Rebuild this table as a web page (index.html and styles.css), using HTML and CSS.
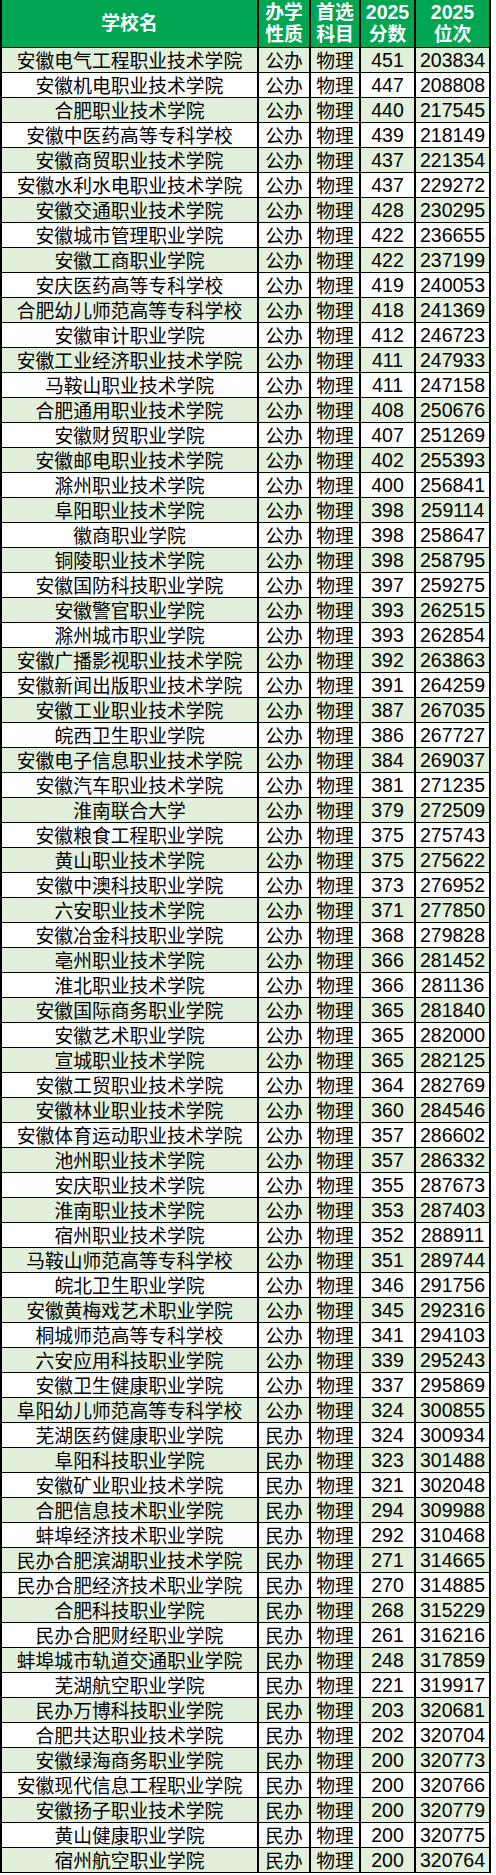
FILE: index.html
```html
<!DOCTYPE html>
<html lang="zh-CN">
<head>
<meta charset="utf-8">
<title>安徽专科院校 2025 物理类录取分数</title>
<link rel="stylesheet" href="styles.css">
</head>
<body>
<div class="sheet">
<div class="row head"><div class="cell"><span class="stack">学校名</span></div><div class="cell"><span class="stack">办学<br>性质</span></div><div class="cell"><span class="stack">首选<br>科目</span></div><div class="cell"><span class="stack"><span class="digits">2025</span><br>分数</span></div><div class="cell"><span class="stack"><span class="digits">2025</span><br>位次</span></div></div>
<div class="row"><div class="cell">安徽电气工程职业技术学院</div><div class="cell">公办</div><div class="cell">物理</div><div class="cell num">451</div><div class="cell num">203834</div></div>
<div class="row"><div class="cell">安徽机电职业技术学院</div><div class="cell">公办</div><div class="cell">物理</div><div class="cell num">447</div><div class="cell num">208808</div></div>
<div class="row"><div class="cell">合肥职业技术学院</div><div class="cell">公办</div><div class="cell">物理</div><div class="cell num">440</div><div class="cell num">217545</div></div>
<div class="row"><div class="cell">安徽中医药高等专科学校</div><div class="cell">公办</div><div class="cell">物理</div><div class="cell num">439</div><div class="cell num">218149</div></div>
<div class="row"><div class="cell">安徽商贸职业技术学院</div><div class="cell">公办</div><div class="cell">物理</div><div class="cell num">437</div><div class="cell num">221354</div></div>
<div class="row"><div class="cell">安徽水利水电职业技术学院</div><div class="cell">公办</div><div class="cell">物理</div><div class="cell num">437</div><div class="cell num">229272</div></div>
<div class="row"><div class="cell">安徽交通职业技术学院</div><div class="cell">公办</div><div class="cell">物理</div><div class="cell num">428</div><div class="cell num">230295</div></div>
<div class="row"><div class="cell">安徽城市管理职业学院</div><div class="cell">公办</div><div class="cell">物理</div><div class="cell num">422</div><div class="cell num">236655</div></div>
<div class="row"><div class="cell">安徽工商职业学院</div><div class="cell">公办</div><div class="cell">物理</div><div class="cell num">422</div><div class="cell num">237199</div></div>
<div class="row"><div class="cell">安庆医药高等专科学校</div><div class="cell">公办</div><div class="cell">物理</div><div class="cell num">419</div><div class="cell num">240053</div></div>
<div class="row"><div class="cell">合肥幼儿师范高等专科学校</div><div class="cell">公办</div><div class="cell">物理</div><div class="cell num">418</div><div class="cell num">241369</div></div>
<div class="row"><div class="cell">安徽审计职业学院</div><div class="cell">公办</div><div class="cell">物理</div><div class="cell num">412</div><div class="cell num">246723</div></div>
<div class="row"><div class="cell">安徽工业经济职业技术学院</div><div class="cell">公办</div><div class="cell">物理</div><div class="cell num">411</div><div class="cell num">247933</div></div>
<div class="row"><div class="cell">马鞍山职业技术学院</div><div class="cell">公办</div><div class="cell">物理</div><div class="cell num">411</div><div class="cell num">247158</div></div>
<div class="row"><div class="cell">合肥通用职业技术学院</div><div class="cell">公办</div><div class="cell">物理</div><div class="cell num">408</div><div class="cell num">250676</div></div>
<div class="row"><div class="cell">安徽财贸职业学院</div><div class="cell">公办</div><div class="cell">物理</div><div class="cell num">407</div><div class="cell num">251269</div></div>
<div class="row"><div class="cell">安徽邮电职业技术学院</div><div class="cell">公办</div><div class="cell">物理</div><div class="cell num">402</div><div class="cell num">255393</div></div>
<div class="row"><div class="cell">滁州职业技术学院</div><div class="cell">公办</div><div class="cell">物理</div><div class="cell num">400</div><div class="cell num">256841</div></div>
<div class="row"><div class="cell">阜阳职业技术学院</div><div class="cell">公办</div><div class="cell">物理</div><div class="cell num">398</div><div class="cell num">259114</div></div>
<div class="row"><div class="cell">徽商职业学院</div><div class="cell">公办</div><div class="cell">物理</div><div class="cell num">398</div><div class="cell num">258647</div></div>
<div class="row"><div class="cell">铜陵职业技术学院</div><div class="cell">公办</div><div class="cell">物理</div><div class="cell num">398</div><div class="cell num">258795</div></div>
<div class="row"><div class="cell">安徽国防科技职业学院</div><div class="cell">公办</div><div class="cell">物理</div><div class="cell num">397</div><div class="cell num">259275</div></div>
<div class="row"><div class="cell">安徽警官职业学院</div><div class="cell">公办</div><div class="cell">物理</div><div class="cell num">393</div><div class="cell num">262515</div></div>
<div class="row"><div class="cell">滁州城市职业学院</div><div class="cell">公办</div><div class="cell">物理</div><div class="cell num">393</div><div class="cell num">262854</div></div>
<div class="row"><div class="cell">安徽广播影视职业技术学院</div><div class="cell">公办</div><div class="cell">物理</div><div class="cell num">392</div><div class="cell num">263863</div></div>
<div class="row"><div class="cell">安徽新闻出版职业技术学院</div><div class="cell">公办</div><div class="cell">物理</div><div class="cell num">391</div><div class="cell num">264259</div></div>
<div class="row"><div class="cell">安徽工业职业技术学院</div><div class="cell">公办</div><div class="cell">物理</div><div class="cell num">387</div><div class="cell num">267035</div></div>
<div class="row"><div class="cell">皖西卫生职业学院</div><div class="cell">公办</div><div class="cell">物理</div><div class="cell num">386</div><div class="cell num">267727</div></div>
<div class="row"><div class="cell">安徽电子信息职业技术学院</div><div class="cell">公办</div><div class="cell">物理</div><div class="cell num">384</div><div class="cell num">269037</div></div>
<div class="row"><div class="cell">安徽汽车职业技术学院</div><div class="cell">公办</div><div class="cell">物理</div><div class="cell num">381</div><div class="cell num">271235</div></div>
<div class="row"><div class="cell">淮南联合大学</div><div class="cell">公办</div><div class="cell">物理</div><div class="cell num">379</div><div class="cell num">272509</div></div>
<div class="row"><div class="cell">安徽粮食工程职业学院</div><div class="cell">公办</div><div class="cell">物理</div><div class="cell num">375</div><div class="cell num">275743</div></div>
<div class="row"><div class="cell">黄山职业技术学院</div><div class="cell">公办</div><div class="cell">物理</div><div class="cell num">375</div><div class="cell num">275622</div></div>
<div class="row"><div class="cell">安徽中澳科技职业学院</div><div class="cell">公办</div><div class="cell">物理</div><div class="cell num">373</div><div class="cell num">276952</div></div>
<div class="row"><div class="cell">六安职业技术学院</div><div class="cell">公办</div><div class="cell">物理</div><div class="cell num">371</div><div class="cell num">277850</div></div>
<div class="row"><div class="cell">安徽冶金科技职业学院</div><div class="cell">公办</div><div class="cell">物理</div><div class="cell num">368</div><div class="cell num">279828</div></div>
<div class="row"><div class="cell">亳州职业技术学院</div><div class="cell">公办</div><div class="cell">物理</div><div class="cell num">366</div><div class="cell num">281452</div></div>
<div class="row"><div class="cell">淮北职业技术学院</div><div class="cell">公办</div><div class="cell">物理</div><div class="cell num">366</div><div class="cell num">281136</div></div>
<div class="row"><div class="cell">安徽国际商务职业学院</div><div class="cell">公办</div><div class="cell">物理</div><div class="cell num">365</div><div class="cell num">281840</div></div>
<div class="row"><div class="cell">安徽艺术职业学院</div><div class="cell">公办</div><div class="cell">物理</div><div class="cell num">365</div><div class="cell num">282000</div></div>
<div class="row"><div class="cell">宣城职业技术学院</div><div class="cell">公办</div><div class="cell">物理</div><div class="cell num">365</div><div class="cell num">282125</div></div>
<div class="row"><div class="cell">安徽工贸职业技术学院</div><div class="cell">公办</div><div class="cell">物理</div><div class="cell num">364</div><div class="cell num">282769</div></div>
<div class="row"><div class="cell">安徽林业职业技术学院</div><div class="cell">公办</div><div class="cell">物理</div><div class="cell num">360</div><div class="cell num">284546</div></div>
<div class="row"><div class="cell">安徽体育运动职业技术学院</div><div class="cell">公办</div><div class="cell">物理</div><div class="cell num">357</div><div class="cell num">286602</div></div>
<div class="row"><div class="cell">池州职业技术学院</div><div class="cell">公办</div><div class="cell">物理</div><div class="cell num">357</div><div class="cell num">286332</div></div>
<div class="row"><div class="cell">安庆职业技术学院</div><div class="cell">公办</div><div class="cell">物理</div><div class="cell num">355</div><div class="cell num">287673</div></div>
<div class="row"><div class="cell">淮南职业技术学院</div><div class="cell">公办</div><div class="cell">物理</div><div class="cell num">353</div><div class="cell num">287403</div></div>
<div class="row"><div class="cell">宿州职业技术学院</div><div class="cell">公办</div><div class="cell">物理</div><div class="cell num">352</div><div class="cell num">288911</div></div>
<div class="row"><div class="cell">马鞍山师范高等专科学校</div><div class="cell">公办</div><div class="cell">物理</div><div class="cell num">351</div><div class="cell num">289744</div></div>
<div class="row"><div class="cell">皖北卫生职业学院</div><div class="cell">公办</div><div class="cell">物理</div><div class="cell num">346</div><div class="cell num">291756</div></div>
<div class="row"><div class="cell">安徽黄梅戏艺术职业学院</div><div class="cell">公办</div><div class="cell">物理</div><div class="cell num">345</div><div class="cell num">292316</div></div>
<div class="row"><div class="cell">桐城师范高等专科学校</div><div class="cell">公办</div><div class="cell">物理</div><div class="cell num">341</div><div class="cell num">294103</div></div>
<div class="row"><div class="cell">六安应用科技职业学院</div><div class="cell">公办</div><div class="cell">物理</div><div class="cell num">339</div><div class="cell num">295243</div></div>
<div class="row"><div class="cell">安徽卫生健康职业学院</div><div class="cell">公办</div><div class="cell">物理</div><div class="cell num">337</div><div class="cell num">295869</div></div>
<div class="row"><div class="cell">阜阳幼儿师范高等专科学校</div><div class="cell">公办</div><div class="cell">物理</div><div class="cell num">324</div><div class="cell num">300855</div></div>
<div class="row"><div class="cell">芜湖医药健康职业学院</div><div class="cell">民办</div><div class="cell">物理</div><div class="cell num">324</div><div class="cell num">300934</div></div>
<div class="row"><div class="cell">阜阳科技职业学院</div><div class="cell">民办</div><div class="cell">物理</div><div class="cell num">323</div><div class="cell num">301488</div></div>
<div class="row"><div class="cell">安徽矿业职业技术学院</div><div class="cell">民办</div><div class="cell">物理</div><div class="cell num">321</div><div class="cell num">302048</div></div>
<div class="row"><div class="cell">合肥信息技术职业学院</div><div class="cell">民办</div><div class="cell">物理</div><div class="cell num">294</div><div class="cell num">309988</div></div>
<div class="row"><div class="cell">蚌埠经济技术职业学院</div><div class="cell">民办</div><div class="cell">物理</div><div class="cell num">292</div><div class="cell num">310468</div></div>
<div class="row"><div class="cell">民办合肥滨湖职业技术学院</div><div class="cell">民办</div><div class="cell">物理</div><div class="cell num">271</div><div class="cell num">314665</div></div>
<div class="row"><div class="cell">民办合肥经济技术职业学院</div><div class="cell">民办</div><div class="cell">物理</div><div class="cell num">270</div><div class="cell num">314885</div></div>
<div class="row"><div class="cell">合肥科技职业学院</div><div class="cell">民办</div><div class="cell">物理</div><div class="cell num">268</div><div class="cell num">315229</div></div>
<div class="row"><div class="cell">民办合肥财经职业学院</div><div class="cell">民办</div><div class="cell">物理</div><div class="cell num">261</div><div class="cell num">316216</div></div>
<div class="row"><div class="cell">蚌埠城市轨道交通职业学院</div><div class="cell">民办</div><div class="cell">物理</div><div class="cell num">248</div><div class="cell num">317859</div></div>
<div class="row"><div class="cell">芜湖航空职业学院</div><div class="cell">民办</div><div class="cell">物理</div><div class="cell num">221</div><div class="cell num">319917</div></div>
<div class="row"><div class="cell">民办万博科技职业学院</div><div class="cell">民办</div><div class="cell">物理</div><div class="cell num">203</div><div class="cell num">320681</div></div>
<div class="row"><div class="cell">合肥共达职业技术学院</div><div class="cell">民办</div><div class="cell">物理</div><div class="cell num">202</div><div class="cell num">320704</div></div>
<div class="row"><div class="cell">安徽绿海商务职业学院</div><div class="cell">民办</div><div class="cell">物理</div><div class="cell num">200</div><div class="cell num">320773</div></div>
<div class="row"><div class="cell">安徽现代信息工程职业学院</div><div class="cell">民办</div><div class="cell">物理</div><div class="cell num">200</div><div class="cell num">320766</div></div>
<div class="row"><div class="cell">安徽扬子职业技术学院</div><div class="cell">民办</div><div class="cell">物理</div><div class="cell num">200</div><div class="cell num">320779</div></div>
<div class="row"><div class="cell">黄山健康职业学院</div><div class="cell">民办</div><div class="cell">物理</div><div class="cell num">200</div><div class="cell num">320775</div></div>
<div class="row"><div class="cell">宿州航空职业学院</div><div class="cell">民办</div><div class="cell">物理</div><div class="cell num">200</div><div class="cell num">320764</div></div>
</div>
</body>
</html>
```
FILE: styles.css
```css
html, body {
  margin: 0;
  padding: 0;
  background: #ffffff;
}

.sheet {
  width: 491px;
  font-family: "Liberation Sans", "Noto Sans CJK SC", sans-serif;
  color: #000000;
}

.row {
  display: grid;
  grid-template-columns: 257px 52px 50px 55px 75px;
  height: 25px;
  box-sizing: border-box;
  border-left: 2px solid #000000;
  border-bottom: 1px solid #000000;
}

.row:nth-child(even) {
  background: #e2efda;
}

.row:nth-child(odd) {
  background: #ffffff;
}

.cell {
  box-sizing: border-box;
  border-right: 2px solid #000000;
  display: flex;
  align-items: center;
  justify-content: center;
  text-align: center;
  white-space: nowrap;
  font-family: "Noto Sans CJK SC", sans-serif;
  font-size: 18.8px;
  line-height: 24px;
}

.cell.num {
  font-family: "Liberation Sans", sans-serif;
  font-size: 19.5px;
}

.stack {
  display: block;
  text-align: center;
}

.row.head {
  height: 48px;
  background: #00a651;
  color: #ffffff;
}

.row.head .cell {
  font-family: "Liberation Sans", "Noto Sans CJK SC", sans-serif;
  font-weight: bold;
  line-height: 22px;
}

.row.head .digits {
  font-size: 19.5px;
}
```
